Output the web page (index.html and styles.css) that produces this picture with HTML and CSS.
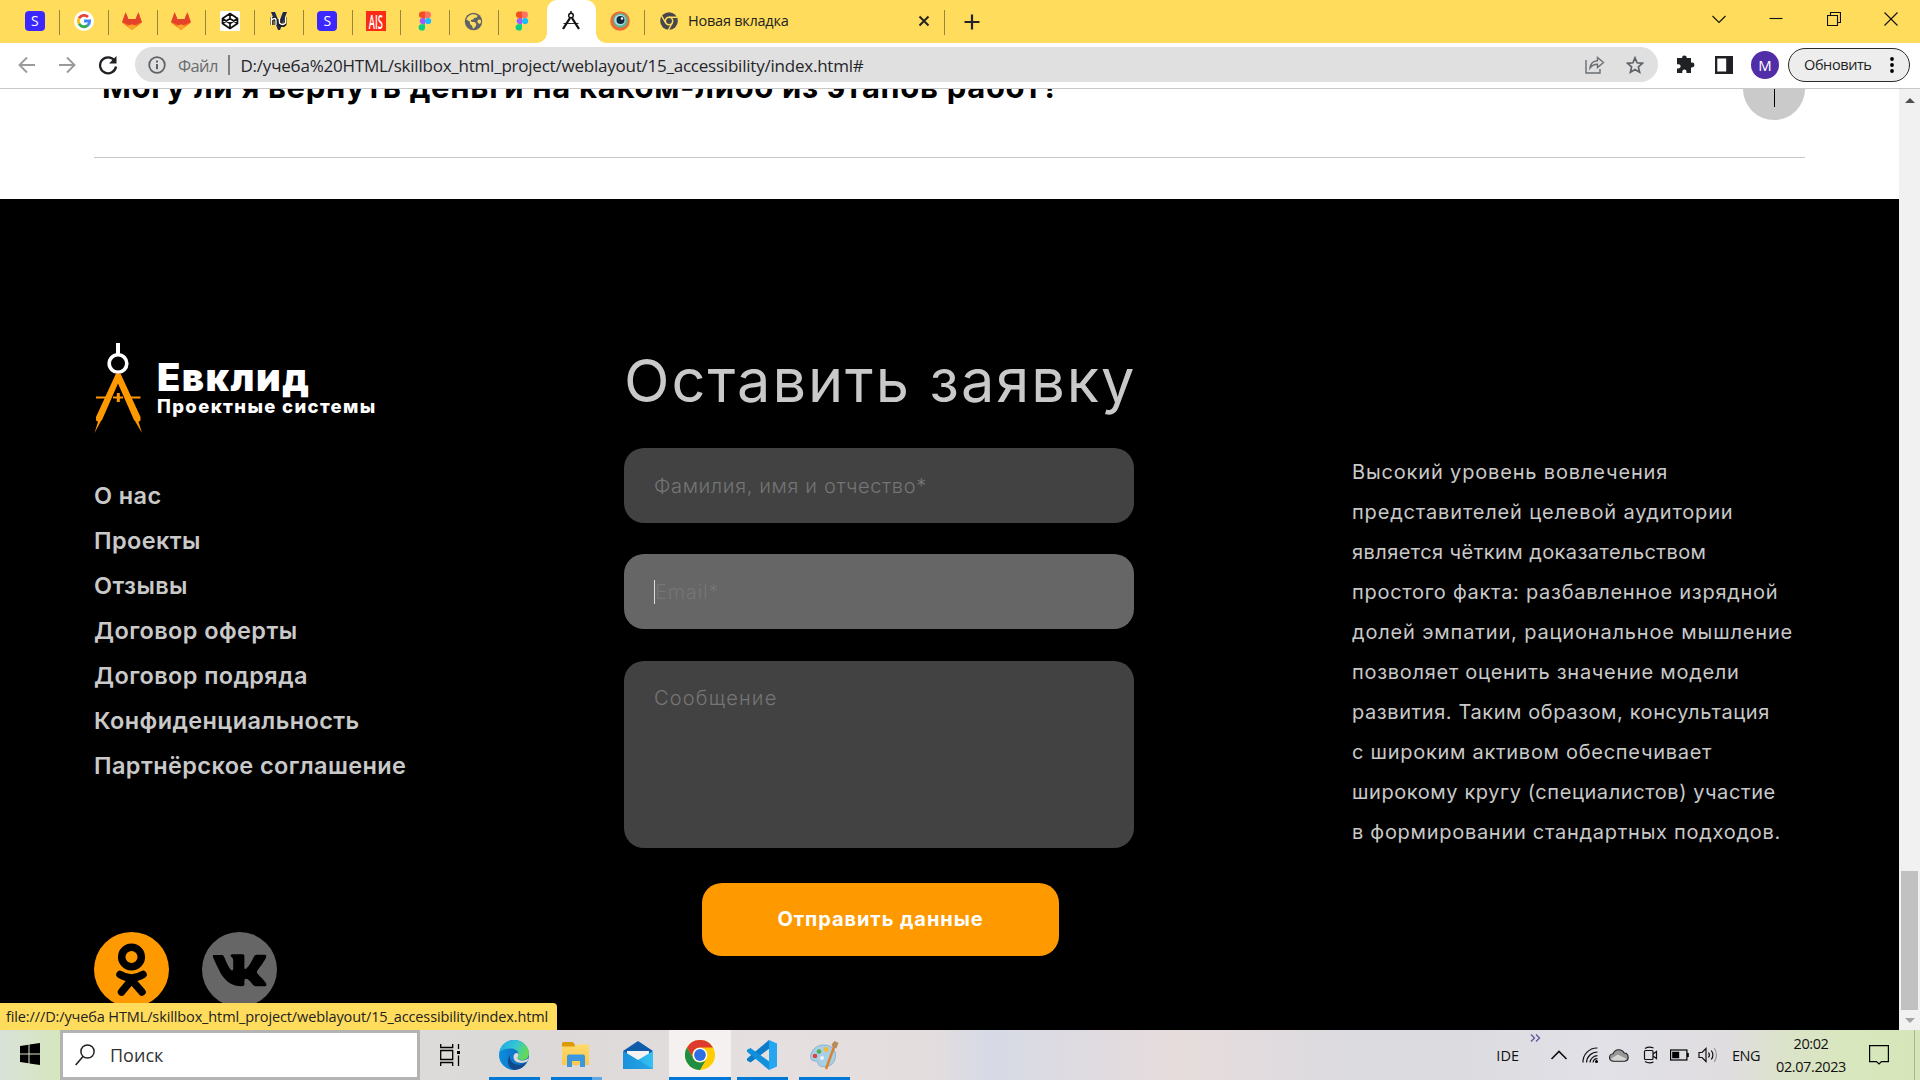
FILE: index.html
```
<!DOCTYPE html>
<html lang="ru">
<head>
<meta charset="utf-8">
<title>Евклид</title>
<link rel="stylesheet" href="styles.css">
</head>
<body>
<svg class="defs" width="0" height="0" aria-hidden="true">
  <defs>
    <linearGradient id="edgeTop" x1="0" x2="1" y1="0" y2=".4"><stop offset="0" stop-color="#1ca6e8"/><stop offset=".55" stop-color="#34c6d6"/><stop offset="1" stop-color="#62d95a"/></linearGradient>
    <linearGradient id="edgeLow" x1="0" x2="1"><stop offset="0" stop-color="#0c8ee0"/><stop offset="1" stop-color="#0f5fae"/></linearGradient>
    <linearGradient id="mailFlap" x1="0" x2="1"><stop offset="0" stop-color="#1d9be2"/><stop offset="1" stop-color="#35c1f1"/></linearGradient>
    <linearGradient id="folderBody" x1="0" x2="0" y1="0" y2="1"><stop offset="0" stop-color="#ffd96b"/><stop offset="1" stop-color="#fbc94c"/></linearGradient>
    <symbol id="gitlab" viewBox="0 0 20 20"><path fill="#fc6d26" d="M0 11.5 3.6 1.2 6.4 8h7.2l2.8-6.8L20 11.5 10 19z"/><path fill="#e24329" d="M3.6 1.2 1 9l5.400-1zM16.400 1.200 19 9l-5.400-1zM6.400 8h7.200L10 19z"/><path fill="#e24329" d="M1 8.300 6.400 8 10 14l3.600-6 5.400.3.6 3L10 15 .4 11.300z"/><path fill="#fca326" d="m5 15.200 5-2 5 2-5 3.800z"/></symbol>
    <symbol id="figma" viewBox="0 0 14 20"><path fill="#f24e1e" d="M7 .5H4.200a3.200 3.200 0 0 0 0 6.400H7z"/><path fill="#ff7262" d="M7 .5h2.800a3.200 3.200 0 0 1 0 6.400H7z"/><path fill="#a259ff" d="M7 6.900H4.200a3.200 3.200 0 0 0 0 6.300H7z"/><circle cx="10.100" cy="10" r="3.100" fill="#1abcfe"/><path fill="#0acf83" d="M7 13.200H4.200A3.200 3.200 0 1 0 7 16.400z"/></symbol>
  </defs>
</svg>

<header class="tabs">
  <div class="tab"><span class="badge-s">S</span></div>
  <div class="tab"><svg width="20" height="20" viewBox="0 0 20 20"><circle cx="10" cy="10" r="10" fill="#fff"/><g fill="none" stroke-width="2.800"><path stroke="#ea4335" d="M5 7.300A5.700 5.700 0 0 1 14 6"/><path stroke="#fbbc05" d="M5 7.300a5.700 5.700 0 0 0 0 5.400"/><path stroke="#34a853" d="M5 12.700a5.700 5.700 0 0 0 8.700 1.700"/><path stroke="#4285f4" d="M10 10h5.700a5.700 5.700 0 0 1-2 4.400"/></g></svg></div>
  <div class="tab"><svg width="20" height="20"><use href="#gitlab"/></svg></div>
  <div class="tab"><svg width="20" height="20"><use href="#gitlab"/></svg></div>
  <div class="tab"><svg width="20" height="20" viewBox="0 0 20 20"><rect width="20" height="20" rx="1.500" fill="#fff"/><path fill="none" stroke="#111" stroke-width="1.700" stroke-linejoin="round" d="m10 2.500 7.500 5v5l-7.500 5-7.500-5v-5zM10 2.500v5M10 17.500v-5M2.500 7.500 10 12.500l7.500-5M2.500 12.500 10 7.500l7.500 5"/></svg></div>
  <div class="tab"><svg width="20" height="20" viewBox="0 0 20 20"><path fill="#20284f" d="M2 1h4l4 10 4-10h4l-7 18H9z"/><path fill="none" stroke="#1a1a1a" stroke-width="3.200" d="M3 6v8m0-5q3-3 4 0v5m4-6v5q3 3 5 0V6"/><path fill="none" stroke="#fff" stroke-width="1.300" d="M2.500 6v8m0-5q4-3 4.500 0v5m3.500-7v5q3 3 6 0V6"/></svg></div>
  <div class="tab"><span class="badge-s">S</span></div>
  <div class="tab"><span class="badge-ais"><b>AIS</b></span></div>
  <div class="tab"><svg width="14" height="20"><use href="#figma"/></svg></div>
  <div class="tab"><svg width="19" height="19" viewBox="0 0 20 20"><circle cx="10" cy="10" r="9.200" fill="#5f6368"/><path fill="#ffdc5c" d="M8 2.500c3-.5 5 .3 6.500 1.700L13 6h-2L9.500 8 7 8.500l1 2h3l2 2-1 3-2.500 2.300-1-3.300-2-1.500-.5-3L2.500 8A8 8 0 0 1 8 2.500zM15 8l2.800.5v3l-1.800 1-2-2z"/></svg></div>
  <div class="tab tab--plain"><svg width="14" height="20"><use href="#figma"/></svg></div>
  <div class="tab tab--active"><svg width="22" height="20" viewBox="0 0 22 20"><g fill="none" stroke="#111"><path d="M11 0v3" stroke-width="1.500"/><circle cx="11" cy="4.500" r="2.300" stroke-width="1.400"/><path d="M10 7 3 18M12 7l7 11" stroke-width="2.300"/><path d="M3.500 12.500h15" stroke-width=".9"/></g></svg></div>
  <div class="tab"><svg width="20" height="20" viewBox="0 0 20 20"><circle cx="10" cy="10" r="9.800" fill="#ee6a35"/><circle cx="10.500" cy="9.500" r="7.300" fill="#5db58a"/><circle cx="10" cy="9" r="5.600" fill="#a8def0"/><circle cx="10.500" cy="9" r="4" fill="#12263a"/><circle cx="12" cy="7.500" r="1.200" fill="#fff"/></svg></div>
  <div class="tab tab--wide">
    <svg width="18" height="18" viewBox="0 0 18 18"><circle cx="9" cy="9" r="8.800" fill="#45474b"/><circle cx="9" cy="9" r="3.700" fill="none" stroke="#ffdc5c" stroke-width="1.500"/><path d="M9 5.200h8M5.700 11 1.800 4.200M12.300 11l-4 7" stroke="#ffdc5c" stroke-width="1.400"/></svg>
    <span class="tab-title">Новая вкладка</span>
    <svg class="tab-close" width="12" height="12" viewBox="0 0 12 12"><path d="m1.500 1.500 9 9m0-9-9 9" stroke="#222" stroke-width="1.900"/></svg>
  </div>
  <svg class="plus" width="16" height="16" viewBox="0 0 16 16"><path d="M8 0.500v15M.5 8h15" stroke="#222" stroke-width="2.200"/></svg>
  <div class="win">
    <svg width="14" height="14" viewBox="0 0 14 14"><path d="m.5 4 6.500 6.500L13.500 4"/></svg>
    <svg width="14" height="14" viewBox="0 0 14 14"><path d="M.5 6.500h13"/></svg>
    <svg width="14" height="14" viewBox="0 0 14 14"><path d="M.5 3.500h10v10H.5zM3.500 3.500v-3h10v10h-3"/></svg>
    <svg width="14" height="14" viewBox="0 0 14 14"><path d="m.5.5 13 13m0-13-13 13"/></svg>
  </div>
</header>

<div class="toolbar">
  <svg class="nav-ico" width="18" height="18" viewBox="0 0 18 18"><path d="M17 9H2m7-7.500L1.500 9 9 16.500"/></svg>
  <svg class="nav-ico" width="18" height="18" viewBox="0 0 18 18"><path d="M1 9h15M9 1.500 16.500 9 9 16.500"/></svg>
  <svg class="nav-ico nav-ico--dark" width="20" height="20" viewBox="0 0 20 20"><path d="M16.500 5.500A8 8 0 1 0 18 11.500"/><path class="solid" d="M18.500 1v7.500H11z"/></svg>
  <div class="omnibox">
    <svg width="18" height="18" viewBox="0 0 18 18"><circle cx="9" cy="9" r="7.800" fill="none" stroke="#5f6368" stroke-width="1.800"/><path d="M9 8v5.200M9 4.500v2" stroke="#5f6368" stroke-width="2"/></svg>
    <span class="scheme">Файл</span>
    <span class="bar"></span>
    <span class="url">D:/учеба%20HTML/skillbox_html_project/weblayout/15_accessibility/index.html#</span>
    <svg class="share" width="20" height="18" viewBox="0 0 20 18"><g fill="none" stroke="#6a6d71" stroke-width="1.400"><path d="M1 4v13h14v-4"/><path d="M5 12c.5-4.500 3-7 7.500-7.300V1.500L18.500 6.500l-6 5V8.300C9 8.300 7 9.300 5 12z"/></g></svg>
    <svg class="star" width="18" height="18" viewBox="0 0 18 18"><path fill="none" stroke="#5f6368" stroke-width="1.700" d="m9 1.800 2.100 5 5.400.5-4.100 3.600 1.200 5.300L9 13.400l-4.600 2.800 1.200-5.300L1.500 7.300l5.400-.5z"/></svg>
  </div>
  <svg class="puzzle" width="19" height="19" viewBox="0 0 19 19"><path fill="#202124" d="M6 3a2.400 2.400 0 0 1 4.800 0H15v4.500h1a2.400 2.400 0 0 1 0 4.900h-1V18h-4.500v-1.500a2.100 2.100 0 0 0-4.200 0V18H1v-4.500h1.500a2.100 2.100 0 0 0 0-4.300H1V3z"/></svg>
  <svg class="panel" width="18" height="18" viewBox="0 0 18 18"><path fill="#202124" d="M0 0h18v18H0zM2.300 2.500v13h8.900v-13z" fill-rule="evenodd"/></svg>
  <span class="avatar">М</span>
  <div class="update"><span>Обновить</span><svg width="4" height="16" viewBox="0 0 4 16"><circle cx="2" cy="2" r="1.900"/><circle cx="2" cy="8" r="1.900"/><circle cx="2" cy="14" r="1.900"/></svg></div>
</div>

<div class="viewport">
  <main class="page">
    <section class="faq">
      <div class="faq-row">
        <h2>Могу ли я вернуть деньги на каком-либо из этапов работ?</h2>
        <svg width="62" height="62" viewBox="0 0 62 62"><circle cx="31" cy="31" r="31" fill="#cacaca"/><path d="M31.500 13v36M13 29.500h36" stroke="#000"/></svg>
      </div>
    </section>
    <footer class="footer">
      <div class="col-left">
        <div class="logo">
          <svg width="49" height="91" viewBox="0 0 49 91"><path fill="#fff" d="M22 0h4v11h-4z"/><circle cx="24" cy="20.500" r="8.800" fill="none" stroke="#fff" stroke-width="3.600"/><path fill="#f90" d="M22 30.500h4.500L46.500 74v3.500l-2 1.200L48 90l-7-12-1-1L24 40.500 8 77l-1 1L.5 90 4 78.700l-2-1.200V74z"/><path fill="#f90" d="M2 53.500h15v2H2zM31 53.500h15.500v2H31zM19 53.500h10v2H19zM22.800 50h3v9h-3z"/></svg>
          <div class="logo-text"><span class="name">Евклид</span><span class="sub">Проектные системы</span></div>
        </div>
        <nav class="links">
          <a>О нас</a><a>Проекты</a><a>Отзывы</a><a>Договор оферты</a><a>Договор подряда</a><a>Конфиденциальность</a><a>Партнёрское соглашение</a>
        </nav>
        <div class="social">
          <svg width="75" height="75" viewBox="0 0 75 75"><circle cx="37.500" cy="37.500" r="37.500" fill="#f90"/><g fill="none" stroke="#000" stroke-width="7.500" stroke-linecap="round"><circle cx="37.500" cy="25" r="9.800"/><path d="M26 42.500q11.500 7 23 0M37.500 48 27.500 60M37.500 48l10.500 12"/></g></svg>
          <svg width="75" height="75" viewBox="0 0 75 75"><circle cx="37.500" cy="37.500" r="37.500" fill="#666"/><path d="M12 23h8q1.500 0 2.200 2 4.300 11 7.300 13.300c1.300.7 1.700-.6 1.700-2.300v-8c-.2-3-2.600-3.300-2.600-4.300 0-.9.900-1.500 2-1.500h9.800c1.600 0 2 .8 2 2.300v11c0 2 1.300 1.700 2.200.8 3.700-3.800 5.400-7.800 7.400-11.800q.8-1.700 2.600-1.700h7.600c2.200 0 2.400 1.200 1.800 2.700-1.500 4-8 12-8.800 13.400-.6 1-.4 1.800.2 2.600 2 2.500 7.400 7 8.800 10.300.6 1.700-.2 2.500-1.900 2.500h-8.500c-3 0-4-4-8-7-2.500-1.500-3.400-.2-3.400 2v3c0 1.300-.5 2-3.500 2-8 0-14.500-4-20-12.500C16.500 36.500 12.500 29 11 25c-.3-1 0-2 1-2z"/></svg>
        </div>
      </div>
      <form class="form">
        <h2>Оставить заявку</h2>
        <div class="field"><span class="ph-name">Фамилия, имя и отчество*</span></div>
        <div class="field field--focus"><i class="caret"></i><span class="ph-mail">Email*</span></div>
        <div class="field field--area"><span class="ph-msg">Сообщение</span></div>
        <button type="button">Отправить данные</button>
      </form>
      <p class="about">
        <span>Высокий уровень вовлечения</span>
        <span>представителей целевой аудитории</span>
        <span>является чётким доказательством</span>
        <span>простого факта: разбавленное изрядной</span>
        <span>долей эмпатии, рациональное мышление</span>
        <span>позволяет оценить значение модели</span>
        <span>развития. Таким образом, консультация</span>
        <span>с широким активом обеспечивает</span>
        <span>широкому кругу (специалистов) участие</span>
        <span>в формировании стандартных подходов.</span>
      </p>
    </footer>
  </main>
  <div class="scrollbar">
    <svg width="10" height="5" viewBox="0 0 10 5"><path fill="#505050" d="M0 5 5 0l5 5z"/></svg>
    <i class="thumb"></i>
    <svg width="10" height="5" viewBox="0 0 10 5"><path fill="#a3a3a3" d="m0 0 5 5 5-5z"/></svg>
  </div>
  <div class="status"><span>file:///D:/учеба HTML/skillbox_html_project/weblayout/15_accessibility/index.html</span></div>
</div>

<div class="taskbar">
  <div class="start"><svg width="20" height="22" viewBox="0 0 20 22"><path d="M0 3l8.500-1.300V10.500H0zM9.500 1.500 20 0v10.500H9.500zM0 11.500h8.500v8.800L0 19zM9.500 11.500H20V22L9.500 20.500z"/></svg></div>
  <div class="search"><svg width="20" height="22" viewBox="0 0 20 22"><circle cx="12.500" cy="7.500" r="6.600" fill="none" stroke="#222" stroke-width="1.500"/><path d="M8 12.500.7 21" stroke="#222" stroke-width="1.600"/></svg><span>Поиск</span></div>
  <div class="apps">
    <div class="app app--view"><svg width="21" height="22" viewBox="0 0 21 22"><path fill="none" stroke="#000" stroke-width="1.300" d="M.7 0v3.500h12V0M.7 6.500h12v9H.7zM.7 22v-3.500h12V22M18.500 0v5M18.500 11.500V22"/><path d="M17 7h3v3h-3z"/></svg></div>
    <div class="app app--run"><svg width="30" height="30" viewBox="0 0 30 30"><circle cx="15" cy="15" r="15" fill="url(#edgeLow)"/><path fill="url(#edgeTop)" d="M.5 12C2 4.500 8 0 15 0c9 0 15 6.500 15 13.500 0 4.500-3.500 6.500-7 6.500-3.500 0-4.500-1-4.500-2 0-.8 1-1.300 1-3.500C19.500 11 16 8.500 12 8.500 7 8.500 2.500 10 .5 12z"/><path fill="#114a8b" d="M11 15c-1 5 3 10 9 10 4 0 6.500-2 8-3.500A15 15 0 0 1 15 30C9 28 7 20 11 15z"/><path fill="#dddad9" d="M14.500 17c0-2.500 1.500-4 3.200-4 1.600.2 2 1.500 1.800 2.500-.2 1-1 1.500-1 2.500 0 1.500 2 2.500 4.500 2.500 3 0 5-1 6.500-2.500-.3 1.800-.8 2.800-1.500 3.800-5.500 2.500-13.500 1-13.500-4.800z"/></svg></div>
    <div class="app app--run app--multi"><svg width="30" height="26" viewBox="0 0 30 26"><path fill="#dd9a08" d="M1 1.500Q1 0 2.500 0H12l2 3v3H1z"/><path fill="url(#folderBody)" d="M1 4.500h13L16 2.500h12V23H1z"/><path fill="#3a96dd" d="M6 25V14.500Q6 12.500 8 12.500h14q2 0 2 2V25h-5v-6h-8v6z"/></svg></div>
    <div class="app"><svg width="30" height="30" viewBox="0 0 30 30"><path fill="#0f5cab" d="M0 11 15 1l15 10-6 6H6z"/><path fill="#f3f3f3" d="M4 11h22v5l-11 7L4 16z"/><path fill="url(#mailFlap)" d="M0 11v18h30V11L15 20z"/><path fill="#1487d4" d="m15 20 15 9H0V11z" opacity=".45"/></svg></div>
    <div class="app app--run app--current"><svg width="30" height="30" viewBox="0 0 30 30"><circle cx="15" cy="15" r="15" fill="#fc0"/><path fill="#de3b2e" d="M2 7.500A15 15 0 0 1 28 7.500H15a7.500 7.500 0 0 0-6.500 11.300z"/><path fill="#1f8e43" d="M2 7.500 8.500 18.800A7.500 7.500 0 0 0 21.500 18.800L15 30A15 15 0 0 1 2 7.500z"/><circle cx="15" cy="15" r="7.300" fill="#fff"/><circle cx="15" cy="15" r="5.900" fill="#2f6fe4"/></svg></div>
    <div class="app app--run"><svg width="30" height="30" viewBox="0 0 30 30"><path fill="#0a7cc9" d="m22 0 1 8L3.500 22.500 0 20.500v-2z"/><path fill="#0f8fdc" d="m22 30 1-8L3.500 8 0 9.800v2z"/><path fill="#26a5f1" d="m22 0 8 3.500v23L22 30z"/></svg></div>
    <div class="app app--run"><svg width="30" height="30" viewBox="0 0 30 30"><path fill="#a9cfe6" stroke="#7ca9c6" stroke-width=".8" d="M2 19C0 11 8 4 16 5c9 .5 12 8 10 14-2 7-9 9-15 7-3-1-1-5-4-5-2 0-4 0-5-2z"/><circle cx="6" cy="16" r="2.300" fill="#e0403c"/><circle cx="10" cy="11.500" r="2.300" fill="#4fb04c"/><circle cx="17" cy="9.500" r="2.400" fill="#f5b92e"/><circle cx="13" cy="18" r="2" fill="#e8f3fa"/><path stroke="#d9822b" stroke-width="2.400" d="M17 29 25 7"/><path fill="#b98a5a" d="m22.500 4.500 3-3.500 4 2-2 5-3 .5z"/></svg></div>
  </div>
  <div class="tray">
    <span class="ide">IDE</span>
    <svg class="more" width="11" height="8" viewBox="0 0 11 8"><path fill="none" stroke="#5a5a9a" stroke-width="1.300" d="m1 .5 3.500 3.500L1 7.500M6 .5 9.500 4 6 7.500"/></svg>
    <svg class="up" width="18" height="18" viewBox="0 0 18 18"><path fill="none" stroke="#111" stroke-width="1.600" d="m1.500 13 7.500-7.500 7.500 7.500"/></svg>
    <svg class="wifi" width="17" height="16" viewBox="0 0 17 16"><g fill="none" stroke="#111" stroke-width="1.200"><path d="M1 15.500A14 14 0 0 1 15.500 1M4.500 15.500a11 11 0 0 1 11-10.500M8 15.500A7.500 7.500 0 0 1 15.500 8.700M11 15.500a4.500 4.500 0 0 1 4.500-3.800"/></g><circle cx="14.500" cy="14.500" r="1.500"/></svg>
    <svg class="cloud" width="20" height="14" viewBox="0 0 20 14"><path fill="#999" stroke="#222" stroke-width="1.100" d="M4.500 13.300a3.800 3.800 0 0 1-.3-7.600 6 6 0 0 1 11-.7 4.200 4.200 0 0 1 .6 8.300z"/><path fill="#d5d5d5" d="M5 12.600 1.800 11l7-4.500L18 11l-2.500 1.600z"/></svg>
    <svg class="meet" width="15" height="18" viewBox="0 0 15 18"><g fill="none" stroke="#111" stroke-width="1.200"><rect x="1.500" y="4.500" width="8.500" height="9" rx="1"/><path d="m10 8 3.500-2.500v7L10 10M2 2.500Q6 0 10.500 2M2 15.500q4 2.500 8.500.5"/></g></svg>
    <svg class="bat" width="19" height="12" viewBox="0 0 19 12"><rect x=".6" y="1" width="16.300" height="10" fill="none" stroke="#000" stroke-width="1.200"/><path d="M2.200 2.700h7v6.600h-7zM17 4h1.800v4H17z"/></svg>
    <svg class="vol" width="21" height="18" viewBox="0 0 21 18"><g fill="none" stroke="#111" stroke-width="1.200"><path d="M1 6.500h3l4-4v13l-4-4H1zM10.500 6.500q1.800 2.500 0 5M13.300 4.500q3.200 4.500 0 9"/><path stroke="#999" d="M16.200 2q4.500 7 0 14"/></g></svg>
    <span class="eng">ENG</span>
    <div class="clock"><span>20:02</span><span class="date">02.07.2023</span></div>
    <svg class="note" width="20" height="20" viewBox="0 0 20 20"><path fill="none" stroke="#000" stroke-width="1.200" d="M.6.6h18.800v16H12.500L10 19l-2.500-2.400H.6z"/></svg>
    <i class="peek"></i>
  </div>
</div>
</body>
</html>
```
FILE: styles.css
```
* { box-sizing: border-box; }
html, body { margin: 0; height: 100%; overflow: hidden; }
body { display: flex; flex-direction: column; width: 1920px; height: 1080px; font-family: "Open Sans", "Noto Sans", sans-serif; color: #222; background: #fff; }
svg { display: block; flex: none; }
h2, p { margin: 0; }
.defs { position: absolute; }
span { white-space: nowrap; }

/* tab strip */
.tabs { display: flex; align-items: stretch; flex: none; height: 43px; padding-left: 10.4px; background: #ffdc5c; }
.tab { position: relative; display: flex; align-items: center; justify-content: center; flex: none; width: 48.76px; padding-bottom: 1px; }
.tab::after { content: ""; position: absolute; right: -1px; top: 10px; width: 1px; height: 25px; background: #97853e; }
.tab--plain::after { display: none; }
.tab--active { border-radius: 10px 10px 0 0; background: #fff; width: 49.7px; margin-right: -1px; }
.tab--active::before, .tab--active::after { content: ""; position: absolute; top: auto; bottom: 0; width: 10px; height: 10px; background: radial-gradient(circle at 0 0, transparent 9.5px, #fff 10px); }
.tab--active::before { left: -10px; }
.tab--active::after { right: -10px; background: radial-gradient(circle at 100% 0, transparent 9.5px, #fff 10px); }
.tab--wide { justify-content: flex-start; width: 299.5px; padding-left: 16px; }
.tab-title { margin-left: 10px; padding-bottom: 1px; font-size: 14.5px; letter-spacing: -.25px; }
.tab-close { margin: 0 14px 0 auto; }
.badge-s { width: 20px; height: 20px; border-radius: 4px; background: #3d27ff; color: #fff; font-size: 14px; line-height: 20px; text-align: center; }
.badge-ais { display: flex; align-items: center; justify-content: center; width: 20px; height: 20px; background: #fb2a17; color: #fff; font-size: 13px; }
.badge-ais b { font-weight: 600; line-height: 20px; transform: scale(.72, 1.5); }
.plus { margin: 14px 0 0 20px; }
.win { display: flex; gap: 43.5px; margin: 12px 22px 0 auto; }
.win path { fill: none; stroke: #111; stroke-width: 1.1; }

/* address bar */
.toolbar { display: flex; align-items: center; flex: none; height: 46px; padding: 0 10px 2px 18px; border-bottom: 1px solid #c8c8c8; background: #fff; }
.nav-ico { margin-right: 22px; fill: none; stroke: #9a9a9a; stroke-width: 1.9; }
.nav-ico--dark { margin-right: 17px; stroke: #202124; stroke-width: 2.3; }
.nav-ico--dark .solid { fill: #202124; stroke: none; }
.omnibox { display: flex; align-items: center; width: 1523px; height: 35px; padding: 0 13px; border-radius: 18px; background: #e0e0e0; }
.scheme { margin-left: 12px; padding-top: 1px; width: 41px; color: #6b6b6b; font-size: 16.5px; letter-spacing: -.6px; }
.bar { width: 1.5px; height: 20px; margin: 0 11px 0 9px; background: #808080; }
.url { padding-top: 1px; color: #25262a; font-size: 17px; letter-spacing: -.224px; }
.share { margin-left: auto; margin-right: 21px; }
.star { margin-right: 1px; }
.puzzle { margin-left: 18px; }
.panel { margin-left: 20px; }
.avatar { width: 28px; height: 28px; margin-left: 18px; border-radius: 50%; background: #512da8; color: #fff; font-size: 15px; line-height: 28px; text-align: center; }
.update { display: flex; align-items: center; justify-content: space-between; width: 122px; height: 34px; margin-left: 9px; padding: 0 15px; border: 1.5px solid #2a2a2a; border-radius: 17px; background: #ededed; font-size: 14.5px; letter-spacing: -.4px; }

/* page */
.viewport { position: relative; display: flex; flex: none; height: 941px; overflow: hidden; }
.page { width: 1899px; font-family: Inter, "Open Sans", sans-serif; }
.faq { height: 110px; padding: 0 94px; background: #fff; overflow: hidden; }
.faq-row { display: flex; justify-content: space-between; align-items: center; height: 100px; margin-top: -31px; padding-bottom: 38px; border-bottom: 1px solid #c9c9c9; }
.faq-row h2 { margin: -3px 0 0 8px; color: #000; font-size: 31px; line-height: 40px; font-weight: 700; letter-spacing: .7px; white-space: nowrap; }
.footer { display: grid; grid-template-columns: 530px 510px auto; height: 831px; padding: 144px 94px 0; background: #000; color: #c9c9c9; }
.logo { display: flex; gap: 14px; }
.logo-text { display: flex; flex-direction: column; padding-top: 18px; color: #fff; }
.name { font-size: 38px; line-height: 32px; font-weight: 900; letter-spacing: 1.5px; }
.sub { font-size: 18.5px; line-height: 27px; font-weight: 800; letter-spacing: 1.36px; }
.links { display: flex; flex-direction: column; margin-top: 39px; font-size: 23.5px; line-height: 45px; font-weight: 600; letter-spacing: .4px; }
.social { display: flex; gap: 33px; margin-top: 144px; }
.form { display: flex; flex-direction: column; }
.form h2 { height: 105px; font-size: 59.5px; line-height: 74px; font-weight: 400; letter-spacing: 1.95px; white-space: nowrap; }
.field { display: flex; align-items: center; height: 75px; margin-bottom: 31px; padding-left: 30px; border-radius: 20px; background: #424242; color: #757575; font-size: 20px; font-weight: 300; }
.field--focus { margin-bottom: 32px; background: #666; }
.field--area { align-items: flex-start; height: 187px; margin-bottom: 35px; padding-top: 25px; line-height: 24px; }
.caret { width: 1px; height: 24px; background: #ddd; }
.ph-name { letter-spacing: .65px; }
.ph-mail { letter-spacing: .75px; }
.ph-msg { letter-spacing: 1.2px; }
.form button { width: 357px; height: 73px; margin-left: 78px; padding: 0 0 2px; border: 0; border-radius: 20px; background: #f90; color: #fff; font: 700 20px Inter, sans-serif; letter-spacing: .93px; }
.about { margin: 109px 0 0 218px; font-size: 20px; line-height: 40px; letter-spacing: .72px; }
.about span { display: block; }
.about span:nth-child(1), .about span:nth-child(2), .about span:nth-child(5) { letter-spacing: .84px; }
.about span:nth-child(3) { letter-spacing: .43px; }
.about span:nth-child(7), .about span:nth-child(9) { letter-spacing: .58px; }

.scrollbar { display: flex; flex-direction: column; align-items: center; width: 21px; padding: 9px 0 7px; background: #f1f1f1; }
.thumb { width: 17px; height: 139px; margin: auto 0 8px; background: #c1c1c1; }
.status { position: absolute; left: 0; bottom: 0; display: flex; align-items: center; width: 557px; height: 27px; padding-left: 6px; border-top-right-radius: 4px; background: #ffdc5c; font-size: 14.5px; letter-spacing: -.12px; }

/* taskbar */
.taskbar { display: flex; flex: none; height: 50px; color: #111; background: linear-gradient(90deg, #d9e1d9 0, #d6e7bd 60px, #dcdbda 420px, #dcd9d8 560px, #e6dfdf 760px, #e4dddd 930px, #d6dae6 990px, #dddbe2 1060px, #e6dcdc 1180px, #dcdbe0 1350px, #dcdbdf 1460px, #e2e1e8 1600px, #dfdddf 1730px, #dbe3c8 1790px, #d8e7bd 1850px, #d6e6ba 1920px); }
.start { display: flex; align-items: center; width: 60px; padding: 0 0 2px 20px; }
.search { display: flex; align-items: center; gap: 15px; width: 360px; padding-left: 12px; border: 3px solid #b3b3b3; background: #fff; font-size: 18px; color: #333; }
.apps { display: flex; padding-left: 10px; }
.app { position: relative; display: flex; align-items: center; justify-content: center; width: 62px; }
.app--view { width: 53px; padding-right: 13px; }
.app--run::after { content: ""; position: absolute; left: 6px; right: 5px; bottom: 0; height: 3px; background: #0078d7; }
.app--multi::after { background: linear-gradient(90deg, #0078d7 41px, #5ea9e4 41px); }
.app--current { background: #f4f1f0; }
.app--current::after { left: 0; right: 0; }
.tray { display: flex; align-items: center; margin-left: auto; font-size: 14.5px; }
.more { margin: 0 9px 34px 11px; }
.wifi { margin-left: 14px; }
.cloud { margin-left: 10px; }
.meet { margin-left: 14px; }
.bat { margin-left: 12px; }
.vol { margin-left: 9px; }
.eng { margin-left: 13px; letter-spacing: -.5px; }
.clock { display: flex; flex-direction: column; align-items: center; width: 70px; margin-left: 16px; line-height: 23px; letter-spacing: -.4px; }
.note { margin-left: 23px; }
.peek { width: 1px; height: 50px; margin: 0 5px 0 25px; background: #a9b596; }
```
